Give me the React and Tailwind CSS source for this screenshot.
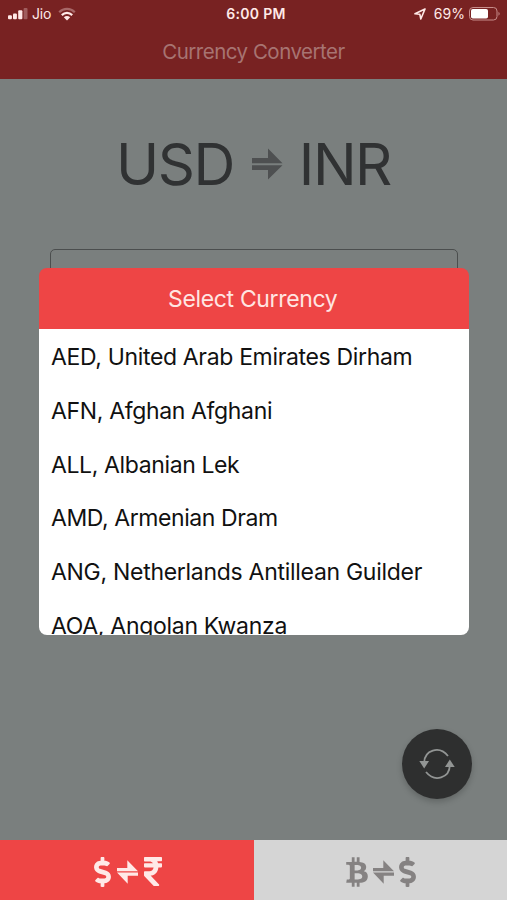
import { useState } from "react";
import { FaBtc, FaDollarSign, FaRupeeSign } from "react-icons/fa";

const currencies = [
  { code: "AED", name: "United Arab Emirates Dirham", spacing: "tracking-[-0.34px]" },
  { code: "AFN", name: "Afghan Afghani", spacing: "tracking-[-0.35px]" },
  { code: "ALL", name: "Albanian Lek", spacing: "tracking-[-0.38px]" },
  { code: "AMD", name: "Armenian Dram", spacing: "tracking-[-0.42px]" },
  { code: "ANG", name: "Netherlands Antillean Guilder", spacing: "tracking-[-0.29px]" },
  { code: "AOA", name: "Angolan Kwanza", spacing: "tracking-[-0.3px]" },
];

function SwapArrows() {
  return (
    <svg viewBox="0 0 21 24" className="h-6 w-[21px]" fill="currentColor">
      <path d="M0 11.2V8H10.3V0.3L21 11.2Z" />
      <path d="M21 12.5V15.8H10.7V23.7L0 12.5Z" />
    </svg>
  );
}

function StatusBar() {
  return (
    <div className="grid h-[26px] grid-cols-3 items-center pl-2 pr-[6px] pt-px text-[14px] text-[#ffe9e7]">
      <div className="flex items-center">
        <svg viewBox="0 0 20 12" className="h-3 w-5" fill="currentColor">
          <rect x="0" y="7.3" width="3.9" height="4" rx="1" />
          <rect x="5" y="5.5" width="3.9" height="5.8" rx="1" />
          <rect x="10.2" y="2.2" width="4.2" height="9.1" rx="1" />
          <rect x="15.6" y="0" width="3.9" height="11.3" rx="1" opacity="0.3" />
        </svg>
        <span className="ml-[4px] tracking-[-0.2px]">Jio</span>
        <svg viewBox="0 0 18 14" className="ml-[7px] h-[14px] w-[18px]" fill="none" stroke="currentColor" strokeWidth="2.2">
          <path d="M1.2 5.2C5.6 0.8 12.4 0.8 16.8 5.2" opacity="0.35" />
          <path d="M3.8 8.1C6.8 5.1 11.2 5.1 14.2 8.1" />
          <path d="M5.8 10.3Q9 7.6 12.2 10.3L9 13.4Z" fill="currentColor" stroke="none" />
        </svg>
      </div>
      <span className="pl-[3px] text-center font-semibold tracking-[0.3px]">6:00 PM</span>
      <div className="flex items-center justify-end">
        <svg viewBox="0 0 12 12" className="mr-[8px] h-3 w-3" fill="none" stroke="currentColor" strokeWidth="1.6" strokeLinejoin="round">
          <path d="M11 1L1 5.8L5.8 6.2L6.8 11Z" />
        </svg>
        <span>69%</span>
        <svg viewBox="0 0 32 14" className="ml-[4px] h-[14px] w-8">
          <rect x="0.5" y="0.5" width="27.5" height="12.5" rx="3.5" fill="none" stroke="#c78d8b" />
          <rect x="2" y="2" width="17" height="9.5" rx="1.8" fill="#fff" />
          <path d="M29.5 4.7Q31.8 6.7 29.5 8.7Z" fill="#c78d8b" />
        </svg>
      </div>
    </div>
  );
}

function CurrencyDialog({ onSelect }) {
  return (
    <div className="absolute left-[38.5px] top-[268px] flex h-[367px] w-[430.5px] flex-col overflow-hidden rounded-[8px]">
      <h2 className="flex h-[61px] shrink-0 items-center justify-center bg-[#ee4545] pr-[2px] pt-[2px] text-[23px] tracking-[-0.35px] text-[#ffe5e2]">
        Select Currency
      </h2>
      <ul className="bg-white pt-px text-[23px] text-[#111]">
        {currencies.map((currency) => (
          <li key={currency.code}>
            <button
              type="button"
              onClick={() => onSelect(currency.code)}
              className={`block h-[53.8px] w-full whitespace-nowrap pl-[12.5px] text-left leading-[54px] ${currency.spacing}`}
            >
              {currency.code}, {currency.name}
            </button>
          </li>
        ))}
      </ul>
    </div>
  );
}

function App() {
  const [from, setFrom] = useState("USD");

  return (
    <div className="relative flex h-[900px] w-[507px] flex-col overflow-hidden bg-[#7a7f7e] font-['Inter','Liberation_Sans',sans-serif]">
      <header className="h-[79px] shrink-0 bg-[#782222]">
        <StatusBar />
        <h1 className="mt-[10px] text-center text-[20.5px] leading-[32px] tracking-[-0.5px] text-[#a77472]">
          Currency Converter
        </h1>
      </header>

      <main className="flex flex-1 flex-col">
        <div className="mt-[54px] flex h-[62px] items-center justify-center text-[58px] text-[#303233]">
          <span className="tracking-[-1.5px]">{from}</span>
          <svg viewBox="0 0 31 32" className="ml-[18px] mr-[16px] h-8 w-[31px]" fill="#4e5051">
            <path d="M0 10H16V0.5L30.5 15.3H0Z" />
            <path d="M0 17.2H30.5L16 31.5V22H0Z" />
          </svg>
          <span className="tracking-[-1.5px]">INR</span>
        </div>
        <div className="ml-[50px] mt-[53.5px] h-[60px] w-[408px] rounded-[5px] border border-[#4b4e4e]" />
        <button
          type="button"
          aria-label="Refresh rates"
          className="mb-[41px] ml-auto mr-[35px] mt-auto flex h-[70px] w-[70px] items-center justify-center rounded-full bg-[#2e2f2f] shadow-[0_3px_6px_rgba(0,0,0,0.2)]"
        >
          <svg viewBox="0 0 36 32" className="h-8 w-9" fill="none" stroke="#929594" strokeWidth="1.8">
            <path d="M5.2 14.5C5.5 2.5 20 -3 29 8" />
            <path d="M30.8 17.5C30.5 29.5 16 35 7 24" />
            <path d="M0.3 13H10L5.2 20.5Z" fill="#929594" stroke="none" />
            <path d="M26 19H35.7L30.8 11.5Z" fill="#929594" stroke="none" />
          </svg>
        </button>
      </main>

      <nav className="grid h-[60px] shrink-0 grid-cols-2">
        <button type="button" className="flex items-center justify-center gap-[6px] bg-[#ee4545] pl-[2px] pt-[3px] text-[#ffe9e7]">
          <FaDollarSign className="h-[30px] w-[17px]" />
          <SwapArrows />
          <FaRupeeSign className="h-[33px] w-[18px]" preserveAspectRatio="none" />
        </button>
        <button type="button" className="flex items-center justify-center gap-[5px] bg-[#d5d5d5] pl-px pt-[3px] text-[#858282]">
          <FaBtc className="h-[30px] w-[22px]" />
          <SwapArrows />
          <FaDollarSign className="h-[30px] w-[17px]" />
        </button>
      </nav>

      <CurrencyDialog onSelect={setFrom} />
    </div>
  );
}

export default App;
